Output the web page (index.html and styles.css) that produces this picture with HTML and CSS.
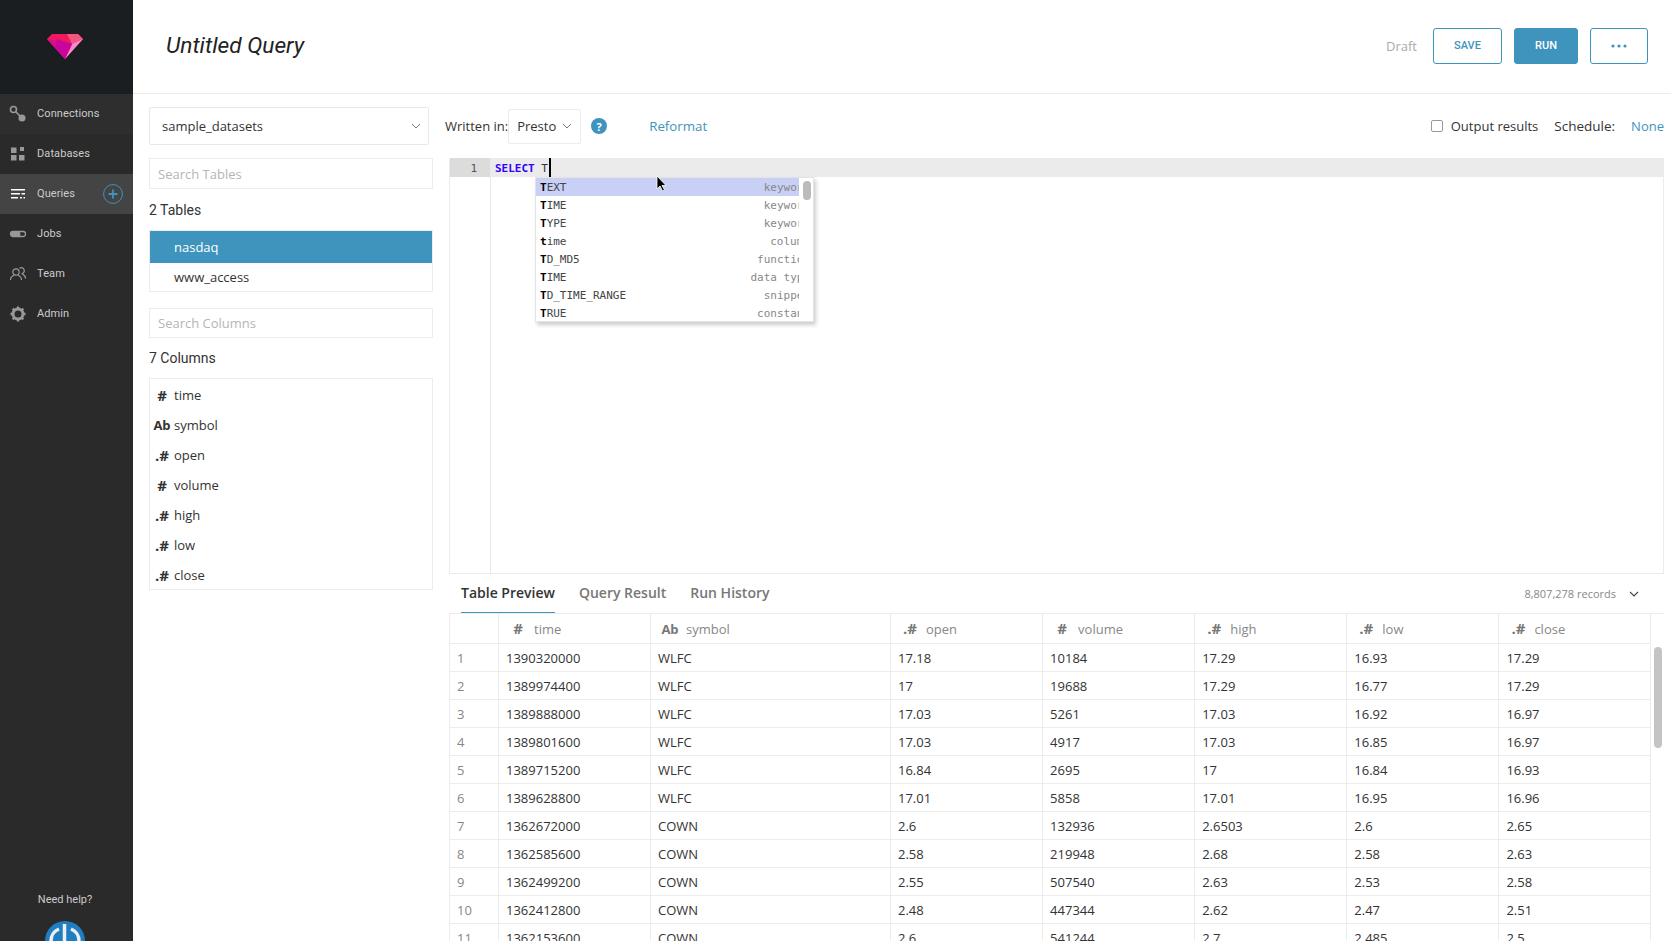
FILE: index.html
```html
<!DOCTYPE html>
<html lang="en">
<head>
<meta charset="utf-8">
<title>Untitled Query</title>
<link rel="stylesheet" href="styles.css">
</head>
<body>
<aside class="sidebar">
  <div class="brand">
    <svg class="gem" width="36" height="25" viewBox="0 0 36 25">
      <polygon points="0,5 5,0 31,0 36,5 18,25" fill="#f0185f"/>
      <polygon points="20,0 31,0 36,5 25,10" fill="#f2587f"/>
      <polygon points="0,5 25,10 18,25" fill="#d80f8c"/>
      <polygon points="25,10 36,5 18,25" fill="#f58cc8"/>
      <polygon points="10,5 25,10 18,25 8,14" fill="#c9059d"/>
    </svg>
  </div>
  <nav class="nav">
    <a class="nav-item">
      <svg class="nav-icon" viewBox="0 0 18 18"><circle cx="4.5" cy="4.5" r="3" fill="none" stroke="#999" stroke-width="1.6"/><line x1="6.5" y1="6.5" x2="12" y2="12" stroke="#999" stroke-width="1.6"/><circle cx="13" cy="13" r="3.5" fill="#999"/></svg>
      <span>Connections</span>
    </a>
    <a class="nav-item">
      <svg class="nav-icon" viewBox="0 0 18 18"><rect x="2" y="2.5" width="5.5" height="5.5" fill="#999"/><rect x="11" y="2" width="4" height="4" fill="#999"/><rect x="2" y="10" width="5.5" height="5.5" fill="#999"/><rect x="10" y="10" width="5.5" height="5.5" fill="#999"/></svg>
      <span>Databases</span>
    </a>
    <a class="nav-item nav-active">
      <svg class="nav-icon" viewBox="0 0 18 18"><path d="M2 4h14v1.5H2zM2 8h9v1.5H2zM12.5 8H16v1.5h-3.500zM2 12h7v1.500H2zM11 12h2v1.500h-2zM14.500 12H16v1.500h-1.500z" fill="#fff"/></svg>
      <span>Queries</span>
      <svg class="nav-add" width="20" height="20" viewBox="0 0 20 20"><circle cx="10" cy="10" r="9.400" fill="none" stroke="#3e94bc"/><path d="M10 5.500v9M5.500 10h9" stroke="#3e94bc" stroke-width="1.800"/></svg>
    </a>
    <a class="nav-item">
      <svg class="nav-icon" viewBox="0 0 18 18"><rect x="1.500" y="6.500" width="15" height="5" rx="2.500" fill="none" stroke="#999" stroke-width="1.300"/><rect x="1.500" y="6.500" width="10" height="5" rx="2.500" fill="#999"/></svg>
      <span>Jobs</span>
    </a>
    <a class="nav-item">
      <svg class="nav-icon" viewBox="0 0 18 18" fill="none" stroke="#999" stroke-width="1.200"><circle cx="7" cy="7" r="3.200"/><path d="M1.500 15c0-3 2-4.200 3.700-4.500M12.500 15c0-3-2-4.200-3.700-4.500"/><path d="M10.500 3.300a3 3 0 1 1 2 5.400M16.500 13.500c0-2.600-1.500-3.800-3-4.200"/></svg>
      <span>Team</span>
    </a>
    <a class="nav-item">
      <svg class="nav-icon" viewBox="0 0 18 18"><circle cx="9" cy="9" r="5" fill="none" stroke="#999" stroke-width="3"/><path d="M9 1.500v3M9 13.500v3M1.500 9h3M13.500 9h3M3.700 3.700l2.100 2.100M12.200 12.200l2.100 2.100M14.300 3.700l-2.100 2.100M5.800 12.200l-2.100 2.100" stroke="#999" stroke-width="2.400"/></svg>
      <span>Admin</span>
    </a>
  </nav>
  <div class="help">
    <div class="help-text">Need help?</div>
    <svg class="help-avatar" width="40" height="40" viewBox="0 0 40 40"><circle cx="20" cy="20" r="20" fill="#1f7dc2"/><path d="M14 8a13 13 0 0 0 0 24" fill="none" stroke="#eee" stroke-width="3.500"/><path d="M26 8a13 13 0 0 1 0 24" fill="none" stroke="#eee" stroke-width="3.500"/><path d="M19.500 3v30" stroke="#eee" stroke-width="3.500"/></svg>
  </div>
</aside>

<div class="content">
  <header class="topbar">
    <h1 class="title">Untitled Query</h1>
    <div class="actions">
      <span class="draft">Draft</span>
      <button class="btn btn-save">SAVE</button>
      <button class="btn btn-run">RUN</button>
      <button class="btn btn-more"><svg width="16" height="4" viewBox="0 0 16 4"><circle cx="2" cy="2" r="1.600" fill="#3e94bc"/><circle cx="8" cy="2" r="1.600" fill="#3e94bc"/><circle cx="14" cy="2" r="1.600" fill="#3e94bc"/></svg></button>
    </div>
  </header>

  <div class="workspace">
    <section class="schema">
      <div class="db-select">
        <span>sample_datasets</span>
        <svg class="chev" width="10" height="6" viewBox="0 0 10 6"><path d="M1 1l4 4 4-4" fill="none" stroke="#777"/></svg>
      </div>
      <div class="search">Search Tables</div>
      <div class="heading">2 Tables</div>
      <ul class="tables">
        <li class="table-row table-active">nasdaq</li>
        <li class="table-row">www_access</li>
      </ul>
      <div class="search search-cols">Search Columns</div>
      <div class="heading heading-cols">7 Columns</div>
      <ul class="columns">
        <li class="col-row"><b class="type num">#</b><span>time</span></li>
        <li class="col-row"><b class="type">Ab</b><span>symbol</span></li>
        <li class="col-row"><b class="type num">.#</b><span>open</span></li>
        <li class="col-row"><b class="type num">#</b><span>volume</span></li>
        <li class="col-row"><b class="type num">.#</b><span>high</span></li>
        <li class="col-row"><b class="type num">.#</b><span>low</span></li>
        <li class="col-row"><b class="type num">.#</b><span>close</span></li>
      </ul>
    </section>

    <section class="main">
      <div class="toolbar">
        <span class="written">Written in:</span>
        <div class="lang"><span>Presto</span><svg width="10" height="6" viewBox="0 0 10 6"><path d="M1 1l4 4 4-4" fill="none" stroke="#777"/></svg></div>
        <span class="help-dot">?</span>
        <a class="reformat">Reformat</a>
        <label class="output"><span class="check"></span>Output results</label>
        <span class="schedule">Schedule:</span>
        <a class="none">None</a>
      </div>

      <div class="editor">
        <div class="gutter"><div class="gutter-active">1</div></div>
        <div class="code">
          <div class="line-active"><span class="kw">SELECT</span> T<span class="caret"></span></div>
        </div>
        <div class="ac">
          <div class="ac-list">
            <div class="ac-row ac-sel"><span><b>T</b>EXT</span><i>keyword</i></div>
            <div class="ac-row"><span><b>T</b>IME</span><i>keyword</i></div>
            <div class="ac-row"><span><b>T</b>YPE</span><i>keyword</i></div>
            <div class="ac-row"><span><b>t</b>ime</span><i>column</i></div>
            <div class="ac-row"><span><b>T</b>D_MD5</span><i>function</i></div>
            <div class="ac-row"><span><b>T</b>IME</span><i>data type</i></div>
            <div class="ac-row"><span><b>T</b>D_TIME_RANGE</span><i>snippet</i></div>
            <div class="ac-row"><span><b>T</b>RUE</span><i>constant</i></div>
          </div>
          <div class="ac-track"><div class="ac-thumb"></div></div>
        </div>
        <svg class="pointer" width="12" height="17" viewBox="0 0 12 17"><path d="M1 1v13l3-3 2.500 5 2-1-2.500-4.500h4z" fill="#000" stroke="#fff" stroke-width=".8"/></svg>
      </div>

      <div class="tabs">
        <a class="tab tab-active">Table Preview</a>
        <a class="tab">Query Result</a>
        <a class="tab">Run History</a>
        <span class="records">8,807,278 records</span>
        <svg class="records-chev" width="10" height="6" viewBox="0 0 10 6"><path d="M1 1l4 4 4-4" fill="none" stroke="#444" stroke-width="1.100"/></svg>
      </div>

      <div class="grid-wrap">
        <table class="grid">
          <colgroup><col class="c-idx"><col class="c-time"><col class="c-sym"><col class="c-n"><col class="c-n"><col class="c-n"><col class="c-n"><col class="c-n"></colgroup>
          <thead>
            <tr>
              <th></th>
              <th><b class="num">#</b>time</th>
              <th><b>Ab</b>symbol</th>
              <th><b class="num">.#</b>open</th>
              <th><b class="num">#</b>volume</th>
              <th><b class="num">.#</b>high</th>
              <th><b class="num">.#</b>low</th>
              <th><b class="num">.#</b>close</th>
            </tr>
          </thead>
          <tbody>
            <tr><td>1</td><td>1390320000</td><td>WLFC</td><td>17.18</td><td>10184</td><td>17.29</td><td>16.93</td><td>17.29</td></tr>
            <tr><td>2</td><td>1389974400</td><td>WLFC</td><td>17</td><td>19688</td><td>17.29</td><td>16.77</td><td>17.29</td></tr>
            <tr><td>3</td><td>1389888000</td><td>WLFC</td><td>17.03</td><td>5261</td><td>17.03</td><td>16.92</td><td>16.97</td></tr>
            <tr><td>4</td><td>1389801600</td><td>WLFC</td><td>17.03</td><td>4917</td><td>17.03</td><td>16.85</td><td>16.97</td></tr>
            <tr><td>5</td><td>1389715200</td><td>WLFC</td><td>16.84</td><td>2695</td><td>17</td><td>16.84</td><td>16.93</td></tr>
            <tr><td>6</td><td>1389628800</td><td>WLFC</td><td>17.01</td><td>5858</td><td>17.01</td><td>16.95</td><td>16.96</td></tr>
            <tr><td>7</td><td>1362672000</td><td>COWN</td><td>2.6</td><td>132936</td><td>2.6503</td><td>2.6</td><td>2.65</td></tr>
            <tr><td>8</td><td>1362585600</td><td>COWN</td><td>2.58</td><td>219948</td><td>2.68</td><td>2.58</td><td>2.63</td></tr>
            <tr><td>9</td><td>1362499200</td><td>COWN</td><td>2.55</td><td>507540</td><td>2.63</td><td>2.53</td><td>2.58</td></tr>
            <tr><td>10</td><td>1362412800</td><td>COWN</td><td>2.48</td><td>447344</td><td>2.62</td><td>2.47</td><td>2.51</td></tr>
            <tr><td>11</td><td>1362153600</td><td>COWN</td><td>2.6</td><td>541244</td><td>2.7</td><td>2.485</td><td>2.5</td></tr>
          </tbody>
        </table>
        <div class="grid-thumb"></div>
      </div>
    </section>
  </div>
</div>
</body>
</html>
```
FILE: styles.css
```css
* { box-sizing: border-box; }
html, body { margin: 0; height: 100%; overflow: hidden; }
body {
  display: flex;
  font-family: "Open Sans", sans-serif;
  font-size: 13px;
  color: #333;
  background: #fff;
}
ul { list-style: none; margin: 0; padding: 0; }

/* sidebar */
.sidebar {
  width: 133px;
  flex: none;
  height: 100vh;
  display: flex;
  flex-direction: column;
  background: #2a2a2a;
  font-family: Roboto, sans-serif;
  color: #ccc;
}
.brand {
  height: 94px;
  flex: none;
  background: #1b1e20;
  display: flex;
  align-items: center;
  justify-content: center;
  padding-right: 3px;
}
.gem { margin-bottom: 1px; margin-top: -1px; }
.nav { display: flex; flex-direction: column; }
.nav-item {
  height: 40px;
  display: flex;
  align-items: center;
  padding-left: 9px;
  font-size: 11px;
  letter-spacing: .1px;
  background: #2a2a2a;
}
.nav-item span { margin-bottom: 2px; }
.nav-item:first-child { background: #2e2e2e; }
.nav-icon { width: 18px; height: 18px; margin-right: 10px; flex: none; }
.nav-active { background: #444; }
.nav-add { margin-left: auto; margin-right: 10px; }
.help {
  margin-top: auto;
  margin-bottom: -20px;
  padding-right: 3px;
  display: flex;
  flex-direction: column;
  align-items: center;
}
.help-text { font-size: 11px; color: #ccc; margin-bottom: 15px; }
.help-avatar { display: block; }

/* content */
.content { flex: 1; min-width: 0; display: flex; flex-direction: column; height: 100vh; }
.topbar {
  height: 94px;
  flex: none;
  display: flex;
  align-items: center;
  justify-content: space-between;
  padding: 0 23px 2px 33px;
  border-bottom: 1px solid #ebebeb;
}
.title {
  margin: 0;
  font: italic 400 22.7px Roboto, sans-serif;
  color: #222;
}
.actions { display: flex; align-items: center; }
.draft { color: #aaa; margin-right: 16px; }
.btn {
  height: 36px;
  border-radius: 3px;
  border: 1px solid #3e94bc;
  background: #fff;
  color: #3e94bc;
  font: 500 11px Roboto, sans-serif;
  padding: 0;
  display: flex;
  align-items: center;
  justify-content: center;
}
.btn-save { width: 69px; margin-right: 12px; }
.btn-run { width: 64px; margin-right: 12px; background: #3e94bc; color: #fff; }
.btn-more { width: 58px; }

.workspace { flex: 1; min-height: 0; display: flex; padding-left: 16px; }

/* schema panel */
.schema { width: 284px; flex: none; margin-right: 16px; padding-top: 13px; }
.db-select {
  width: 280px;
  height: 38px;
  border: 1px solid #e8e8e8;
  border-radius: 2px;
  display: flex;
  align-items: center;
  justify-content: space-between;
  padding: 0 7px 0 12px;
  color: #333;
}
.search {
  margin-top: 13px;
  height: 31px;
  border: 1px solid #ececec;
  padding-left: 8px;
  display: flex;
  align-items: center;
  color: #b5b5b5;
}
.heading {
  font: 400 14px Roboto, sans-serif;
  color: #333;
  height: 41px;
  display: flex;
  align-items: center;
}
.tables { border: 1px solid #ececec; height: 62px; }
.table-row {
  height: 29px;
  padding-left: 24px;
  padding-bottom: 2px;
  display: flex;
  align-items: center;
}
.table-active { height: 32px; padding-bottom: 0; background: #3e94bc; color: #fff; }
.search-cols { margin-top: 16px; height: 30px; }
.heading-cols { margin-top: 0; height: 40px; }
.columns { border: 1px solid #ececec; height: 212px; padding-top: 1px; }
.col-row { height: 30px; display: flex; align-items: center; }
.type {
  width: 24px;
  text-align: center;
  font-weight: 700;
  font-size: 13px;
  color: #333;
}
.num { font-size: 15px; line-height: 18px; }

/* main */
.main { flex: none; width: 1215px; display: flex; flex-direction: column; min-height: 0; }
.toolbar {
  height: 64px;
  flex: none;
  margin-left: -4px;
  display: flex;
  align-items: center;
}
.lang {
  width: 73px;
  height: 35px;
  border: 1px solid #ececec;
  border-radius: 2px;
  display: flex;
  align-items: center;
  justify-content: space-between;
  padding: 0 8px;
}
.help-dot {
  width: 16px;
  height: 16px;
  margin-left: 10px;
  border-radius: 50%;
  background: #3e94bc;
  color: #fff;
  font-size: 11px;
  font-weight: 700;
  display: flex;
  align-items: center;
  justify-content: center;
}
.reformat { margin-left: 42px; color: #3e94bc; font-size: 13.3px; }
.output { margin-left: auto; display: flex; align-items: center; }
.check {
  width: 12px;
  height: 12px;
  border: 1px solid #999;
  border-radius: 2px;
  margin-right: 8px;
}
.schedule { margin-left: 16px; font-size: 13.5px; }
.none { margin-left: 16px; color: #3e94bc; }

/* editor */
.editor {
  position: relative;
  height: 416px;
  flex: none;
  display: flex;
  border: 1px solid #ececec;
  border-top: 0;
  font-family: "DejaVu Sans Mono", monospace;
  font-size: 11px;
}
.gutter { width: 41px; flex: none; border-right: 1px solid #e8e8e8; }
.gutter-active {
  height: 19px;
  line-height: 21px;
  background: #dcdcdc;
  text-align: right;
  padding-right: 13px;
  color: #555;
}
.code { flex: 1; }
.line-active {
  height: 19px;
  line-height: 21px;
  padding-left: 4px;
  background: #ebebeb;
  color: #333;
  white-space: pre;
  display: flex;
}
.kw { color: #3300ff; font-weight: 700; }
.caret { width: 2px; height: 19px; background: #000; margin-left: 1px; }
.ac {
  position: absolute;
  left: 85px;
  top: 19px;
  width: 279px;
  height: 145px;
  background: #fff;
  border: 1px solid #e4e4e4;
  box-shadow: 2px 3px 4px rgba(0, 0, 0, .2);
  display: flex;
  overflow: hidden;
}
.ac-list { width: 263px; flex: none; overflow: hidden; }
.ac-row {
  height: 18px;
  line-height: 19px;
  display: flex;
  justify-content: space-between;
  padding-left: 4px;
  color: #444;
}
.ac-row b { color: #000; }
.ac-row i { font-style: normal; color: #888; margin-right: -11px; white-space: pre; }
.ac-sel { background: #c8d1f5; }
.ac-track { flex: 1; }
.ac-thumb { width: 8px; height: 19px; border-radius: 4px; background: #bbb; margin: 3px 0 0 4px; }
.pointer { position: absolute; left: 206px; top: 17px; }

/* tabs */
.tabs { height: 40px; flex: none; display: flex; align-items: stretch; padding-left: 12px; }
.tab {
  font-size: 14px;
  color: #777;
  font-weight: 600;
  margin-right: 24px;
  display: flex;
  align-items: center;
  padding-bottom: 2px;
  border-bottom: 2px solid transparent;
}
.tab-active { color: #333; border-bottom-color: #3e94bc; }
.records { margin-left: auto; align-self: center; font-size: 11px; color: #888; margin-right: 13px; margin-bottom: 2px; }
.records-chev { align-self: center; margin-right: 25px; }

/* grid */
.grid-wrap { position: relative; flex: 1; min-height: 0; overflow: hidden; border-top: 1px solid #ececec; margin-top: -1px; }
.grid { table-layout: fixed; border-collapse: collapse; width: 1201.500px; }
.c-idx { width: 49px; }
.c-time { width: 152px; }
.c-sym { width: 240px; }
.c-n { width: 152.1px; }
.grid th, .grid td {
  border: 1px solid #ececec;
  border-top: 0;
  height: 28px;
  padding: 2px 7px 0;
  text-align: left;
  font-weight: 400;
  white-space: nowrap;
  overflow: hidden;
  color: #333;
}
.grid th { height: 29px; padding: 2px 0 0 8px; color: #888; line-height: 18px; }
.grid th b {
  display: inline-block;
  width: 22px;
  margin-right: 5px;
  text-align: center;
  font-weight: 700;
  color: #777;
  line-height: 1;
}
.grid td:first-child { color: #888; }
.grid-thumb {
  position: absolute;
  left: 1205px;
  top: 33px;
  width: 8px;
  height: 101px;
  border-radius: 4px;
  background: #c4c4c4;
}
```
